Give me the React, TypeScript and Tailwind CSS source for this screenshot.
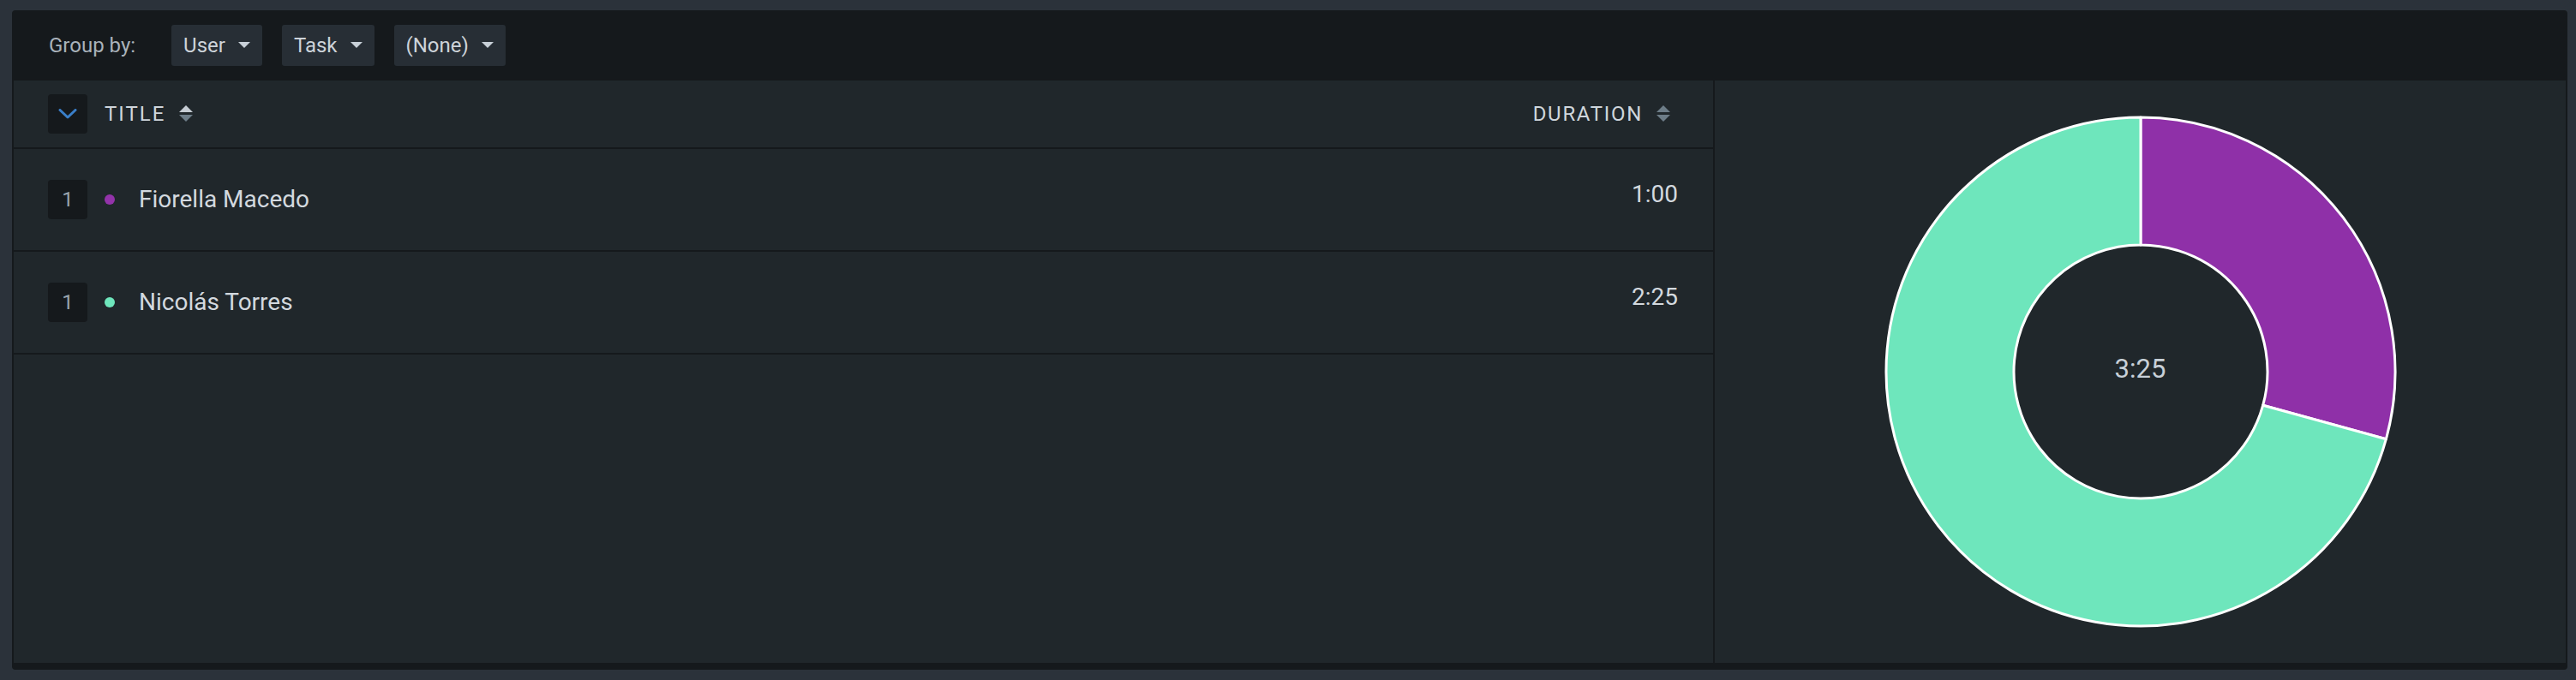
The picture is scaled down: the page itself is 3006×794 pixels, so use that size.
import React from "react";

const rows = [
  { count: 1, name: "Fiorella Macedo", color: "#9333aa", duration: "1:00", seconds: 60 },
  { count: 1, name: "Nicolás Torres", color: "#6ee6bc", duration: "2:25", seconds: 145 },
];

function Caret() {
  return (
    <svg width="14" height="8" viewBox="0 0 14 8" className="shrink-0">
      <path d="M0 0 L14 0 L7 7 Z" fill="#c8d0d8" />
    </svg>
  );
}

function SortIcon({ active }: { active?: boolean }) {
  return (
    <svg width="16" height="20" viewBox="0 0 16 20" className="shrink-0">
      <path d="M8 0 L16 8 L0 8 Z" fill={active ? "#c5ccd3" : "#6d7d88"} />
      <path d="M0 11 L16 11 L8 19 Z" fill="#6d7d88" />
    </svg>
  );
}

function GroupSelect({ label }: { label: string }) {
  return (
    <button className="flex h-[48px] items-center gap-[15px] rounded-[3px] bg-[#272e35] pl-[14px] pr-[14px] text-[24px] text-[#cdd3d9]">
      <span>{label}</span>
      <Caret />
    </button>
  );
}

// donut geometry: 600x600 box, outer r 297, inner r 148
function arcPoint(angle: number, r: number) {
  const rad = (angle * Math.PI) / 180;
  return [300 + r * Math.sin(rad), 300 - r * Math.cos(rad)];
}

function slicePath(start: number, end: number) {
  const R = 297;
  const r = 148;
  const large = end - start > 180 ? 1 : 0;
  const [x1, y1] = arcPoint(start, R);
  const [x2, y2] = arcPoint(end, R);
  const [x3, y3] = arcPoint(end, r);
  const [x4, y4] = arcPoint(start, r);
  return `M${x1} ${y1} A${R} ${R} 0 ${large} 1 ${x2} ${y2} L${x3} ${y3} A${r} ${r} 0 ${large} 0 ${x4} ${y4} Z`;
}

function Donut() {
  const total = rows.reduce((s, r) => s + r.seconds, 0);
  let angle = 0;
  const slices = rows.map((row) => {
    const start = angle;
    angle += (row.seconds / total) * 360;
    return { ...row, start, end: angle };
  });

  return (
    <div className="relative h-[600px] w-[600px]">
      <svg width="600" height="600" viewBox="0 0 600 600">
        {slices.map((s) => (
          <path
            key={s.name}
            d={slicePath(s.start, s.end)}
            fill={s.color === "#9333aa" ? "#8f30a8" : s.color}
            stroke="#ffffff"
            strokeWidth="3"
            strokeLinejoin="round"
          />
        ))}
      </svg>
      <div className="absolute inset-0 flex items-center justify-center pb-[6px] text-[31px] text-[#c8d0d8]">
        3:25
      </div>
    </div>
  );
}

export default function App() {
  return (
    <div
      className="h-[794px] w-full bg-[#2b323a] pb-[12px] pl-[14px] pr-[10px] pt-[12px]"
      style={{ fontFamily: "Roboto, 'Liberation Sans', sans-serif" }}
    >
      <div className="flex h-full flex-col rounded-[4px] bg-[#15191c] px-[2px] pb-[8px]">
        {/* toolbar */}
        <div className="flex h-[82px] shrink-0 items-center pl-[41px]">
          <span className="mr-[42px] text-[24px] text-[#a9b2ba]">Group by:</span>
          <div className="flex items-center gap-[23px]">
            <GroupSelect label="User" />
            <GroupSelect label="Task" />
            <GroupSelect label="(None)" />
          </div>
        </div>

        {/* content */}
        <div className="flex min-h-0 flex-1 bg-[#20272b]">
          {/* table */}
          <div className="flex flex-1 flex-col border-r-2 border-[#15191c]">
            <div className="flex h-[80px] shrink-0 items-center border-b-2 border-[#15191c] pl-[40px] pr-[50px]">
              <div className="flex h-[46px] w-[46px] items-center justify-center rounded-[4px] bg-[#15191c]">
                <svg width="22" height="12" viewBox="0 0 22 12">
                  <path
                    d="M2 1.5 L11 10 L20 1.5"
                    fill="none"
                    stroke="#3a7fc9"
                    strokeWidth="3"
                    strokeLinecap="round"
                    strokeLinejoin="round"
                  />
                </svg>
              </div>
              <div className="ml-[20px] flex items-center gap-[16px]">
                <span className="text-[24px] tracking-[2px] text-[#cfd6dc]">TITLE</span>
                <SortIcon active />
              </div>
              <div className="ml-auto flex items-center gap-[16px]">
                <span className="text-[24px] tracking-[1.7px] text-[#cfd6dc]">DURATION</span>
                <SortIcon />
              </div>
            </div>

            {rows.map((row) => (
              <div
                key={row.name}
                className="flex h-[120px] shrink-0 items-center border-b-2 border-[#15191c] pl-[40px] pr-[41px]"
              >
                <div className="flex h-[46px] w-[46px] items-center justify-center rounded-[4px] bg-[#15191c] text-[24px] text-[#98a3ae]">
                  {row.count}
                </div>
                <span
                  className="ml-[20px] h-[12px] w-[12px] rounded-full"
                  style={{ backgroundColor: row.color }}
                />
                <span className="ml-[28px] text-[28px] text-[#d3d9df]">{row.name}</span>
                <span className="ml-auto pb-[12px] text-[28px] text-[#d3d9df]">{row.duration}</span>
              </div>
            ))}
          </div>

          {/* chart */}
          <div className="flex w-[993px] shrink-0 items-center justify-center">
            <Donut />
          </div>
        </div>
      </div>
    </div>
  );
}
